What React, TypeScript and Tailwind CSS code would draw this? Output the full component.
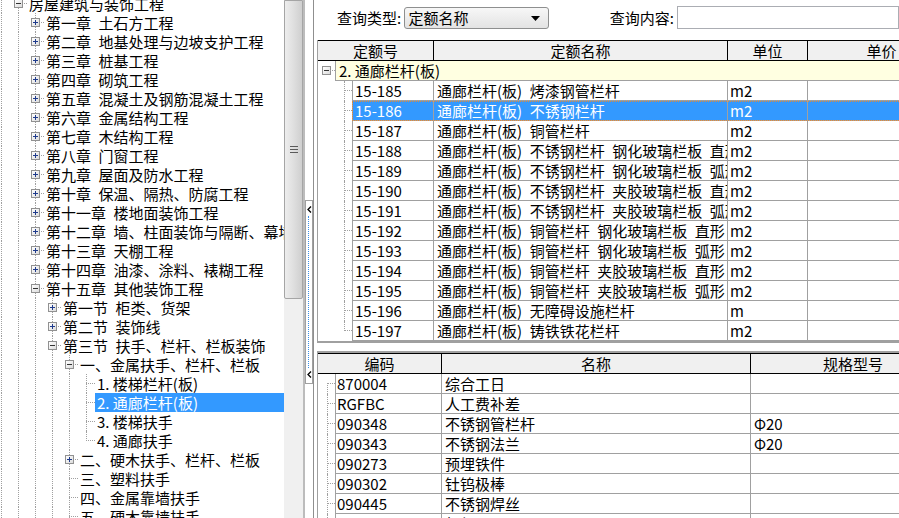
import React from "react";

type TreeNode = { level: number; exp?: "+" | "-"; text: string; last?: boolean; sel?: boolean };

const tree: TreeNode[] = [
  { level: 0, exp: "-", text: "房屋建筑与装饰工程" },
  { level: 1, exp: "+", text: "第一章\u2002土石方工程" },
  { level: 1, exp: "+", text: "第二章\u2002地基处理与边坡支护工程" },
  { level: 1, exp: "+", text: "第三章\u2002桩基工程" },
  { level: 1, exp: "+", text: "第四章\u2002砌筑工程" },
  { level: 1, exp: "+", text: "第五章\u2002混凝土及钢筋混凝土工程" },
  { level: 1, exp: "+", text: "第六章\u2002金属结构工程" },
  { level: 1, exp: "+", text: "第七章\u2002木结构工程" },
  { level: 1, exp: "+", text: "第八章\u2002门窗工程" },
  { level: 1, exp: "+", text: "第九章\u2002屋面及防水工程" },
  { level: 1, exp: "+", text: "第十章\u2002保温、隔热、防腐工程" },
  { level: 1, exp: "+", text: "第十一章\u2002楼地面装饰工程" },
  { level: 1, exp: "+", text: "第十二章\u2002墙、柱面装饰与隔断、幕墙工程" },
  { level: 1, exp: "+", text: "第十三章\u2002天棚工程" },
  { level: 1, exp: "+", text: "第十四章\u2002油漆、涂料、裱糊工程" },
  { level: 1, exp: "-", text: "第十五章\u2002其他装饰工程" },
  { level: 2, exp: "+", text: "第一节\u2002柜类、货架" },
  { level: 2, exp: "+", text: "第二节\u2002装饰线" },
  { level: 2, exp: "-", text: "第三节\u2002扶手、栏杆、栏板装饰" },
  { level: 3, exp: "-", text: "一、金属扶手、栏杆、栏板" },
  { level: 4, text: "1. 楼梯栏杆(板)" },
  { level: 4, text: "2. 通廊栏杆(板)", sel: true },
  { level: 4, text: "3. 楼梯扶手" },
  { level: 4, text: "4. 通廊扶手", last: true },
  { level: 3, exp: "+", text: "二、硬木扶手、栏杆、栏板" },
  { level: 3, text: "三、塑料扶手" },
  { level: 3, text: "四、金属靠墙扶手" },
  { level: 3, text: "五、硬木靠墙扶手" },
];

const quotaRows = [
  ["15-185", "通廊栏杆(板)\u2002烤漆钢管栏杆", "m2"],
  ["15-186", "通廊栏杆(板)\u2002不锈钢栏杆", "m2"],
  ["15-187", "通廊栏杆(板)\u2002铜管栏杆", "m2"],
  ["15-188", "通廊栏杆(板)\u2002不锈钢栏杆\u2002钢化玻璃栏板\u2002直形", "m2"],
  ["15-189", "通廊栏杆(板)\u2002不锈钢栏杆\u2002钢化玻璃栏板\u2002弧形", "m2"],
  ["15-190", "通廊栏杆(板)\u2002不锈钢栏杆\u2002夹胶玻璃栏板\u2002直形", "m2"],
  ["15-191", "通廊栏杆(板)\u2002不锈钢栏杆\u2002夹胶玻璃栏板\u2002弧形", "m2"],
  ["15-192", "通廊栏杆(板)\u2002铜管栏杆\u2002钢化玻璃栏板\u2002直形", "m2"],
  ["15-193", "通廊栏杆(板)\u2002铜管栏杆\u2002钢化玻璃栏板\u2002弧形", "m2"],
  ["15-194", "通廊栏杆(板)\u2002铜管栏杆\u2002夹胶玻璃栏板\u2002直形", "m2"],
  ["15-195", "通廊栏杆(板)\u2002铜管栏杆\u2002夹胶玻璃栏板\u2002弧形", "m2"],
  ["15-196", "通廊栏杆(板)\u2002无障碍设施栏杆", "m"],
  ["15-197", "通廊栏杆(板)\u2002铸铁铁花栏杆", "m2"],
];

const materials = [
  ["870004", "综合工日", ""],
  ["RGFBC", "人工费补差", ""],
  ["090348", "不锈钢管栏杆", "Φ20"],
  ["090343", "不锈钢法兰", "Φ20"],
  ["090273", "预埋铁件", ""],
  ["090302", "钍钨极棒", ""],
  ["090445", "不锈钢焊丝", ""],
  ["090011", "氩气", ""],
];

function ExpandBox({ exp, x }: { exp: "+" | "-"; x: number }) {
  return (
    <span
      className="absolute top-[5px] flex h-[9px] w-[9px] items-center justify-center border border-[#919191] bg-linear-to-br from-white to-[#dcdcdc]"
      style={{ left: x - 4 }}
    >
      <span className={exp === "+" ? "absolute h-px w-[5px] bg-[#1f3b8c]" : "absolute h-px w-[5px] bg-[#333333]"} />
      {exp === "+" && <span className="absolute h-[5px] w-px bg-[#1f3b8c]" />}
    </span>
  );
}

function TreeRow({ n }: { n: TreeNode }) {
  const cx = 18 + 17 * n.level;
  const tx = 29 + 17 * n.level;
  return (
    <div className="relative flex h-[19px] items-center whitespace-nowrap" style={{ paddingLeft: tx - 2 }}>
      <span className="absolute bottom-0 left-px top-0 border-l border-dotted border-[#a0a0a0]" />
      {Array.from({ length: n.level }, (_, l) => (
        <span
          key={l}
          className="absolute bottom-0 top-0 border-l border-dotted border-[#a0a0a0]"
          style={{ left: 18 + 17 * l }}
        />
      ))}
      <span
        className={n.last ? "absolute top-0 h-[10px] border-l border-dotted border-[#a0a0a0]" : "absolute bottom-0 top-0 border-l border-dotted border-[#a0a0a0]"}
        style={{ left: cx }}
      />
      <span className="absolute top-[9px] border-t border-dotted border-[#a0a0a0]" style={{ left: cx, width: tx - 2 - cx }} />
      {n.exp && <ExpandBox exp={n.exp} x={cx} />}
      <span className={n.sel ? "flex-1 bg-[#3399ff] px-[2px] leading-[19px] text-white" : "px-[2px] leading-[19px]"}>
        {n.text}
      </span>
    </div>
  );
}

function Scrollbar() {
  return (
    <div className="h-full w-[19px] shrink-0 bg-[#f0f0f0]">
      <div className="flex h-[299px] flex-col items-center justify-center gap-[2px] rounded-b-[2px] border border-[#a5a5a5] bg-linear-to-r from-[#ededed] via-[#dfdfdf] to-[#cfcfcf]">
        <span className="h-px w-[8px] bg-[#5a5a5a]" />
        <span className="h-px w-[8px] bg-[#5a5a5a]" />
        <span className="h-px w-[8px] bg-[#5a5a5a]" />
      </div>
    </div>
  );
}

function Chevron() {
  return (
    <svg width="5" height="7" viewBox="0 0 5 7" className="block">
      <path d="M4 0.5 L1 3.5 L4 6.5" fill="none" stroke="#000" strokeWidth="1.3" />
    </svg>
  );
}

function Splitter() {
  return (
    <div className="h-full w-[11px] shrink-0 border-l-2 border-r border-l-[#bcbcbc] border-r-[#8f8f8f] bg-white">
      <div className="relative mt-[200px] flex h-[184px] w-[8px] flex-col items-center justify-between border border-[#a0a0a0] bg-white py-[5px]">
        <Chevron />
        <span className="absolute bottom-[15px] left-[2px] top-[15px] border-l border-dotted border-[#3a8ee6]" />
        <Chevron />
      </div>
    </div>
  );
}

function QueryBar() {
  return (
    <div className="flex h-[40px] items-start whitespace-nowrap pl-[23px] pt-[7px]">
      <span className="w-[69px] leading-[21px]">查询类型:</span>
      <div className="flex h-[22px] w-[150px] items-center justify-between rounded-[3px] border border-[#8e8f8f] bg-linear-to-b from-[#f7f7f7] to-[#e3e3e3] pl-[4px] pr-[8px]">
        <span className="leading-[20px]">定额名称</span>
        <svg width="9" height="5" viewBox="0 0 9 5">
          <path d="M0 0 H9 L4.5 5 Z" fill="#000" />
        </svg>
      </div>
      <span className="ml-[61px] w-[70px] leading-[21px]">查询内容:</span>
      <div className="-mt-px h-[23px] w-[230px] border border-[#abadb3] bg-white" />
    </div>
  );
}

function QuotaTable() {
  return (
    <div className="ml-[3px] w-[638px] border-b-2 border-l border-[#a0a0a0]">
      <div className="flex h-[21px] border-y border-black bg-[#f0f0f0] leading-[19px]">
        <div className="w-[116px] shrink-0 border-r border-black text-center">定额号</div>
        <div className="w-[294px] shrink-0 border-r border-black text-center">定额名称</div>
        <div className="w-[80px] shrink-0 border-r border-black text-center">单位</div>
        <div className="flex-1 text-center">单价</div>
      </div>
      <div className="flex h-[20px]">
        <div className="relative w-[17px] shrink-0">
          <ExpandBox exp="-" x={8} />
          <span className="absolute left-[12px] top-[9px] w-[5px] border-t border-dotted border-[#a0a0a0]" />
        </div>
        <div className="flex-1 border-b border-l border-[#a0a0a0] bg-[#ffffe1] pl-[3px] leading-[19px]">
          2. 通廊栏杆(板)
        </div>
      </div>
      {quotaRows.map(([code, name, unit], i) => {
        const sel = code === "15-186";
        const last = i === quotaRows.length - 1;
        return (
          <div key={code} className="flex h-[20px]">
            <div className="relative w-[34px] shrink-0">
              <span
                className={last ? "absolute left-[26px] top-0 h-[10px] border-l border-dotted border-[#a0a0a0]" : "absolute bottom-0 left-[26px] top-0 border-l border-dotted border-[#a0a0a0]"}
              />
              <span className="absolute left-[26px] top-[9px] w-[8px] border-t border-dotted border-[#a0a0a0]" />
            </div>
            <div
              className={
                sel
                  ? "flex flex-1 border-b border-[#a0a0a0] bg-[#3399ff] leading-[19px] text-white outline-1 -outline-offset-1 outline-dotted outline-[#e08a3a]"
                  : "flex flex-1 border-b border-[#a0a0a0] leading-[19px]"
              }
            >
              <div className="w-[81px] shrink-0 border-l border-[#a0a0a0] pl-[2px]">{code}</div>
              <div className="w-[294px] shrink-0 overflow-hidden whitespace-nowrap border-l border-[#a0a0a0] pl-[3px]">
                {name}
              </div>
              <div className="w-[80px] shrink-0 border-l border-[#a0a0a0] pl-[2px]">{unit}</div>
              <div className="flex-1 border-l border-[#a0a0a0]" />
            </div>
          </div>
        );
      })}
    </div>
  );
}

function MaterialTable() {
  return (
    <div className="ml-[3px] mt-[8px] w-[638px] border-l border-t-2 border-[#a0a0a0]">
      <div className="flex h-[21px] border-y border-black bg-[#f0f0f0] leading-[19px]">
        <div className="w-[124px] shrink-0 border-r border-black text-center">编码</div>
        <div className="w-[309px] shrink-0 border-r border-black text-center">名称</div>
        <div className="flex-1 text-center">规格型号</div>
      </div>
      {materials.map(([code, name, spec], i) => (
        <div key={code} className="flex h-[20px]">
          <div className="relative w-[17px] shrink-0">
            <span
              className={i === 0 ? "absolute bottom-0 left-[9px] top-[9px] border-l border-dotted border-[#a0a0a0]" : "absolute bottom-0 left-[9px] top-0 border-l border-dotted border-[#a0a0a0]"}
            />
            <span className="absolute left-[9px] top-[9px] w-[8px] border-t border-dotted border-[#a0a0a0]" />
          </div>
          <div className="flex flex-1 border-b border-[#a0a0a0] leading-[19px]">
            <div className="w-[106px] shrink-0 border-l border-[#a0a0a0] pl-[1px]">{code}</div>
            <div className="w-[309px] shrink-0 border-l border-[#a0a0a0] pl-[3px]">{name}</div>
            <div className="flex-1 border-l border-[#a0a0a0] pl-[3px]">{spec}</div>
          </div>
        </div>
      ))}
    </div>
  );
}

export default function App() {
  return (
    <div className="flex h-[518px] w-[899px] overflow-hidden bg-white font-['Noto_Sans_CJK_SC','Liberation_Sans',sans-serif] text-[15px] text-black">
      <div className="h-full w-[284px] shrink-0 overflow-hidden">
        <div className="-mt-[6px]">
          {tree.map((n, i) => (
            <TreeRow key={i} n={n} />
          ))}
        </div>
      </div>
      <Scrollbar />
      <Splitter />
      <div className="min-w-0 flex-1 overflow-hidden">
        <QueryBar />
        <QuotaTable />
        <MaterialTable />
      </div>
    </div>
  );
}
